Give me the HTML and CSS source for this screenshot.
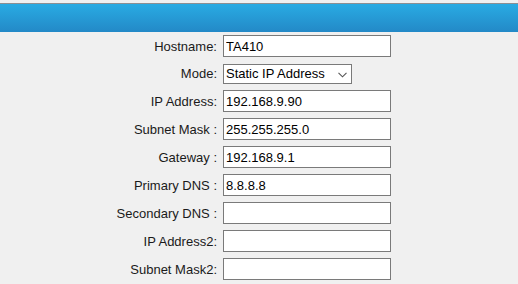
FILE: index.html
```html
<!DOCTYPE html>
<html>
<head>
    <title>Network Settings</title>
    <link rel="stylesheet" href="styles.css">
</head>
<body>
    <div class="title-bar"></div>

    <form class="net-form" action="#" method="POST">
        <div class="form-row">
            <label for="hostname">Hostname:</label>
            <input type="text" id="hostname" name="hostname" value="TA410">
        </div>

        <div class="form-row mode-row">
            <label for="mode">Mode:</label>
            <div class="select-wrap">
                <select id="mode" name="mode">
                    <option>Static IP Address</option>
                    <option>DHCP</option>
                </select>
                <svg class="select-arrow" width="9" height="6" viewBox="0 0 9 6">
                    <path d="M0.5 0.8 L4.5 4.8 L8.5 0.8" fill="none" stroke="#555" stroke-width="1.1"/>
                </svg>
            </div>
        </div>

        <div class="form-row">
            <label for="ipaddr">IP Address:</label>
            <input type="text" id="ipaddr" name="ipaddr" value="192.168.9.90">
        </div>

        <div class="form-row">
            <label for="netmask">Subnet Mask :</label>
            <input type="text" id="netmask" name="netmask" value="255.255.255.0">
        </div>

        <div class="form-row">
            <label for="gateway">Gateway :</label>
            <input type="text" id="gateway" name="gateway" value="192.168.9.1">
        </div>

        <div class="form-row">
            <label for="dns1">Primary DNS :</label>
            <input type="text" id="dns1" name="dns1" value="8.8.8.8">
        </div>

        <div class="form-row">
            <label for="dns2">Secondary DNS :</label>
            <input type="text" id="dns2" name="dns2">
        </div>

        <div class="form-row">
            <label for="ipaddr2">IP Address2:</label>
            <input type="text" id="ipaddr2" name="ipaddr2">
        </div>

        <div class="form-row">
            <label for="netmask2">Subnet Mask2:</label>
            <input type="text" id="netmask2" name="netmask2">
        </div>
    </form>
</body>
</html>
```

FILE: styles.css
```css
body {
    margin: 0;
    padding: 0;
    background-color: #f0f0f0;
    font-family: "Liberation Sans", Arial, sans-serif;
    font-size: 13px;
    color: #1a1a1a;
}

.title-bar {
    margin-top: 3px;
    height: 28px;
    border-top: 1px solid #8a8f94;
    background: linear-gradient(to bottom, #29abe3, #2389c7);
}

.net-form {
    margin: 0;
}

.form-row {
    display: grid;
    grid-template-columns: 217px 168px;
    column-gap: 6px;
    align-items: center;
    height: 28px;
}

.mode-row {
    height: 27px;
}

label {
    text-align: right;
    white-space: nowrap;
}

input[type="text"] {
    width: 168px;
    height: 22px;
    padding: 0 2px;
    border: 1px solid #7a7a7a;
    background-color: #fff;
    color: #000;
    font-family: inherit;
    font-size: 13px;
    box-sizing: border-box;
    outline: none;
}

.select-wrap {
    position: relative;
    width: 129px;
    height: 20px;
}

select {
    appearance: none;
    -webkit-appearance: none;
    width: 129px;
    height: 20px;
    padding: 0 0 0 2px;
    border: 1px solid #7a7a7a;
    border-radius: 0;
    background-color: #fff;
    color: #000;
    font-family: inherit;
    font-size: 13px;
    box-sizing: border-box;
}

.select-arrow {
    position: absolute;
    right: 5px;
    top: 8px;
    pointer-events: none;
}
```
